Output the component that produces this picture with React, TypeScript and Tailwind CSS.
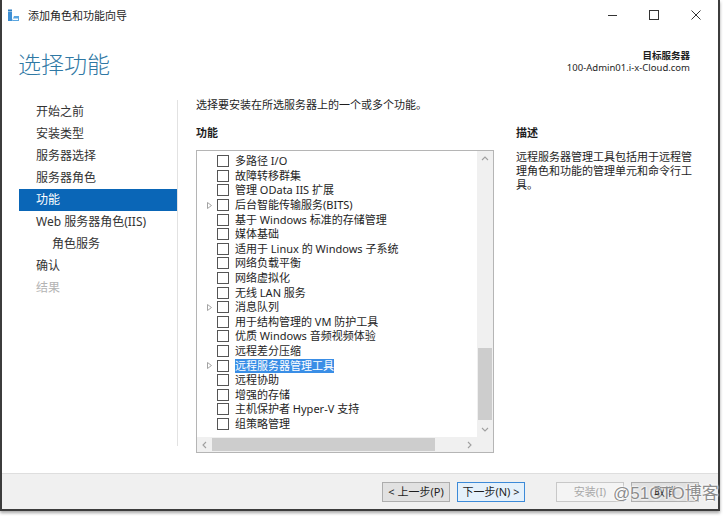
import React from "react";

const features: { name: string; expand?: boolean; selected?: boolean }[] = [
  { name: "多路径 I/O" },
  { name: "故障转移群集" },
  { name: "管理 OData IIS 扩展" },
  { name: "后台智能传输服务(BITS)", expand: true },
  { name: "基于 Windows 标准的存储管理" },
  { name: "媒体基础" },
  { name: "适用于 Linux 的 Windows 子系统" },
  { name: "网络负载平衡" },
  { name: "网络虚拟化" },
  { name: "无线 LAN 服务" },
  { name: "消息队列", expand: true },
  { name: "用于结构管理的 VM 防护工具" },
  { name: "优质 Windows 音频视频体验" },
  { name: "远程差分压缩" },
  { name: "远程服务器管理工具", expand: true, selected: true },
  { name: "远程协助" },
  { name: "增强的存储" },
  { name: "主机保护者 Hyper-V 支持" },
  { name: "组策略管理" },
];

const nav: { label: string; state?: "active" | "disabled"; indent?: boolean }[] = [
  { label: "开始之前" },
  { label: "安装类型" },
  { label: "服务器选择" },
  { label: "服务器角色" },
  { label: "功能", state: "active" },
  { label: "Web 服务器角色(IIS)" },
  { label: "角色服务", indent: true },
  { label: "确认" },
  { label: "结果", state: "disabled" },
];

function Chevron({ dir }: { dir: "up" | "down" | "left" | "right" }) {
  const d =
    dir === "up"
      ? "M1 5 L4 2 L7 5"
      : dir === "down"
      ? "M1 2 L4 5 L7 2"
      : dir === "left"
      ? "M5 1 L2 4 L5 7"
      : "M2 1 L5 4 L2 7";
  return (
    <svg width="8" height="8" viewBox="0 0 8 8">
      <path d={d} fill="none" stroke="#a0a0a0" strokeWidth="1.1" />
    </svg>
  );
}

export default function App() {
  return (
    <div className="relative w-[723px] h-[516px] bg-white overflow-hidden font-['Segoe_UI','Noto_Sans','Noto_Sans_CJK_SC',sans-serif] text-[#1e1e1e]">
      <div className="w-[720px] h-[511px] flex flex-col border-l-2 border-r-2 border-b-2 border-[#3c3c3c] shadow-[0_2px_3px_rgba(0,0,0,0.35)] bg-white">
        {/* Title bar */}
        <div className="h-[30px] flex items-center shrink-0">
          <div className="ml-[5px] w-[14px] flex items-center">
            <svg width="13" height="13" viewBox="0 0 13 13">
              <rect x="1" y="0.5" width="4" height="2" fill="#2f7fc1" />
              <rect x="1" y="3" width="4" height="9" fill="#3d8fd4" />
              <path d="M5 12 L7 7 L12 7 L12 12 Z" fill="#5aa6e0" />
              <rect x="6" y="9.5" width="5" height="1.5" fill="#ffffff" />
            </svg>
          </div>
          <span className="ml-[7px] text-[11px] leading-none">添加角色和功能向导</span>
          <div className="ml-auto flex items-center h-full mr-[1px]">
            <div className="w-[42px] flex justify-center">
              <div className="w-[9px] h-px bg-[#333]" />
            </div>
            <div className="w-[42px] flex justify-center">
              <div className="w-[10px] h-[10px] border border-[#333]" />
            </div>
            <div className="w-[42px] flex justify-center">
              <svg width="10" height="10" viewBox="0 0 10 10">
                <path d="M0.5 0.5 L9.5 9.5 M9.5 0.5 L0.5 9.5" stroke="#333" strokeWidth="1" />
              </svg>
            </div>
          </div>
        </div>

        {/* Header */}
        <div className="h-[64px] shrink-0 flex justify-between items-start pl-[16px] pr-[28px]">
          <div className="mt-[18px] text-[23px] leading-[32px] text-[#2f78a4] font-light">选择功能</div>
          <div className="mt-[20px] text-right text-[9.5px] leading-[12px]">
            <div className="font-bold">目标服务器</div>
            <div>100-Admin01.i-x-Cloud.com</div>
          </div>
        </div>

        {/* Main */}
        <div className="flex-1 flex min-h-0">
          <div className="w-[175px] pt-[7px] pl-[17px]">
            {nav.map((n) => (
              <div
                key={n.label}
                className={
                  "h-[22px] flex items-center text-[12px] " +
                  (n.state === "active"
                    ? "bg-[#0a66b7] text-white "
                    : n.state === "disabled"
                    ? "text-[#b4b4b4] "
                    : "text-[#333] ") +
                  (n.indent ? "pl-[33px]" : "pl-[17px]")
                }
              >
                {n.label}
              </div>
            ))}
          </div>
          <div className="w-px mt-[6px] mb-[27px] bg-[#e2e2e2]" />
          <div className="flex-1 pl-[18px] pt-[3px]">
            <div className="text-[11px] leading-[16px]">选择要安装在所选服务器上的一个或多个功能。</div>
            <div className="flex mt-[12px]">
              <div className="w-[298px]">
                <div className="text-[11px] leading-[16px] font-bold">功能</div>
                <div className="mt-[9px] h-[303px] border border-[#b5b5b5] grid grid-cols-[1fr_16px] grid-rows-[1fr_15px]">
                  <div className="pt-[3px] overflow-hidden">
                    {features.map((f) => (
                      <div key={f.name} className="h-[14.6px] flex items-center">
                        <div className="w-[20px] flex justify-end pr-[5px]">
                          {f.expand && (
                            <svg width="5" height="7" viewBox="0 0 5 7">
                              <path d="M0.5 0.5 L4.5 3.5 L0.5 6.5 Z" fill="none" stroke="#9a9a9a" strokeWidth="0.9" />
                            </svg>
                          )}
                        </div>
                        <div className="w-[12px] h-[12px] border border-[#555] bg-white shrink-0" />
                        <span
                          className={
                            "ml-[6px] text-[11px] leading-[14px] whitespace-nowrap " +
                            (f.selected ? "bg-[#3a8ee6] text-white" : "")
                          }
                        >
                          {f.name}
                        </span>
                      </div>
                    ))}
                  </div>
                  <div className="bg-[#f0f0f0] flex flex-col items-center">
                    <div className="h-[15px] flex items-center">
                      <Chevron dir="up" />
                    </div>
                    <div className="flex-1 w-full flex flex-col">
                      <div className="h-[182px]" />
                      <div className="mx-[1px] h-[72px] bg-[#cdcdcd]" />
                    </div>
                    <div className="h-[15px] flex items-center">
                      <Chevron dir="down" />
                    </div>
                  </div>
                  <div className="bg-[#f0f0f0] flex items-center">
                    <div className="w-[15px] flex justify-center">
                      <Chevron dir="left" />
                    </div>
                    <div className="w-[223px] h-[13px] bg-[#cdcdcd]" />
                    <div className="flex-1" />
                    <div className="w-[15px] flex justify-center">
                      <Chevron dir="right" />
                    </div>
                  </div>
                  <div className="bg-[#f0f0f0]" />
                </div>
              </div>
              <div className="ml-[22px] w-[185px]">
                <div className="text-[11px] leading-[16px] font-bold">描述</div>
                <div className="mt-[9px] text-[11px] leading-[14px]">
                  <div>远程服务器管理工具包括用于远程管</div>
                  <div>理角色和功能的管理单元和命令行工</div>
                  <div>具。</div>
                </div>
              </div>
            </div>
          </div>
        </div>

        {/* Bottom bar */}
        <div className="h-[36px] shrink-0 bg-[#f0f0f0] border-t border-[#dedede] flex items-center justify-end pr-[19px] gap-[7px] text-[11px]">
          <button className="w-[68px] h-[20px] border border-[#adadad] bg-[#e1e1e1] text-[#1e1e1e] leading-none">
            &lt; 上一步(P)
          </button>
          <button className="w-[68px] h-[20px] border border-[#3c8ad8] bg-[#e5f1fb] text-[#1e1e1e] leading-none">
            下一步(N) &gt;
          </button>
          <button className="ml-[24px] w-[68px] h-[20px] border border-[#c8c8c8] bg-[#f4f4f4] text-[#a8a8a8] leading-none">
            安装(I)
          </button>
          <button className="w-[68px] h-[20px] border border-[#adadad] bg-[#e1e1e1] text-[#1e1e1e] leading-none">
            取消
          </button>
        </div>
      </div>

      {/* Watermark */}
      <div className="absolute left-[613px] top-[483px] text-[17px] leading-[22px] text-[#8c8c8c] font-['Liberation_Sans','Noto_Sans_CJK_SC',sans-serif] [text-shadow:0_0_2px_#fff,0_0_2px_#fff,0_0_3px_#fff]">
        @51CTO博客
      </div>
    </div>
  );
}
